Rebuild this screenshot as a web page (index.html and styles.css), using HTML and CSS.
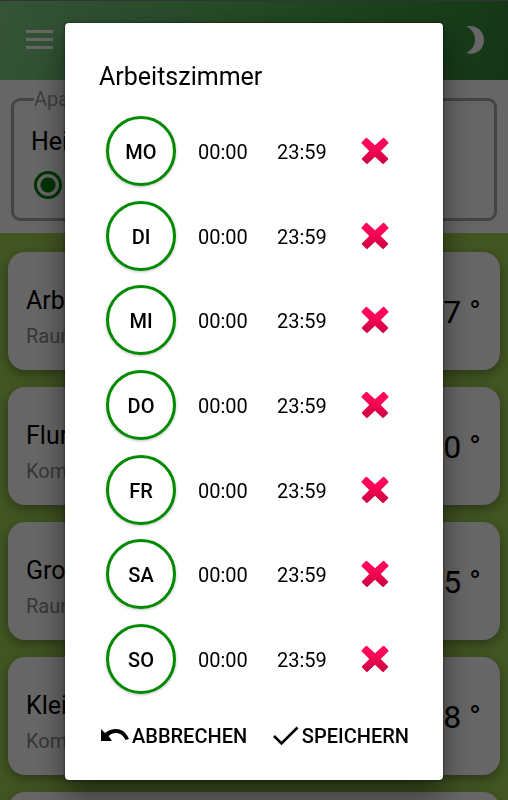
FILE: index.html
```html
<!DOCTYPE html>
<html lang="de">
<head>
<meta charset="utf-8">
<meta name="viewport" content="width=device-width, initial-scale=1">
<title>Arbeitszimmer</title>
<link rel="stylesheet" href="styles.css">
</head>
<body>
<div class="app">
  <header class="topbar">
    <button class="icon-button" aria-label="Menu"><svg width="28" height="20" viewBox="0 0 28 20"><path d="M1 1.500h27M1 9.500h27M1 17.500h27" stroke="#fff" stroke-width="3"/></svg></button>
    <button class="icon-button" aria-label="Theme"><svg width="20" height="30" viewBox="0 0 20 30"><path d="M1 1.500C10-1 19 5 19 15S10 31 1 28C13 23 13 6 1 1.500Z" fill="#fff"/></svg></button>
  </header>
  <section class="filter">
    <fieldset class="group">
      <legend>Apa</legend>
      <div class="group-title">Hei</div>
      <input class="radio" type="radio" aria-label="Hei" checked>
    </fieldset>
  </section>
  <main class="rooms">
    <article class="card"><div><h2>Arb</h2><p>Raum</p></div><span class="temp">7 °</span></article>
    <article class="card"><div><h2>Flur</h2><p>Kom</p></div><span class="temp">0 °</span></article>
    <article class="card"><div><h2>Gro</h2><p>Raum</p></div><span class="temp">5 °</span></article>
    <article class="card"><div><h2>Klei</h2><p>Kom</p></div><span class="temp">8 °</span></article>
    <article class="card"></article>
  </main>
</div>
<svg class="defs" width="0" height="0" aria-hidden="true">
  <defs>
    <linearGradient id="red" x1="0" y1="0" x2="0" y2="1"><stop offset="0.3" stop-color="#ff0759"/><stop offset="1" stop-color="#c9003f"/></linearGradient>
    <symbol id="cross" viewBox="0 0 28 28"><path d="M6 0.900L14 8.300L22 0.900Q22.600 0.500 23.200 1L27.300 5.300Q27.700 5.900 27.300 6.500L19.700 14L27 21.200Q27.400 21.800 27 22.400L22.700 26.800Q22.100 27.200 21.500 26.800L14 19.700L6.500 26.800Q5.900 27.200 5.300 26.800L1 22.400Q0.600 21.800 1 21.200L8.300 14L0.700 6.500Q0.300 5.900 0.700 5.300L4.800 1Q5.400 0.500 6 0.900Z" fill="url(#red)"/></symbol>
  </defs>
</svg>
<div class="backdrop">
  <section class="dialog" role="dialog" aria-modal="true" aria-labelledby="title">
    <h1 id="title">Arbeitszimmer</h1>
    <ul class="days">
      <li><button class="day">MO</button><button class="time">00:00</button><button class="time">23:59</button><button class="remove" aria-label="MO"><svg width="28" height="28"><use href="#cross"/></svg></button></li>
      <li><button class="day">DI</button><button class="time">00:00</button><button class="time">23:59</button><button class="remove" aria-label="DI"><svg width="28" height="28"><use href="#cross"/></svg></button></li>
      <li><button class="day">MI</button><button class="time">00:00</button><button class="time">23:59</button><button class="remove" aria-label="MI"><svg width="28" height="28"><use href="#cross"/></svg></button></li>
      <li><button class="day">DO</button><button class="time">00:00</button><button class="time">23:59</button><button class="remove" aria-label="DO"><svg width="28" height="28"><use href="#cross"/></svg></button></li>
      <li><button class="day">FR</button><button class="time">00:00</button><button class="time">23:59</button><button class="remove" aria-label="FR"><svg width="28" height="28"><use href="#cross"/></svg></button></li>
      <li><button class="day">SA</button><button class="time">00:00</button><button class="time">23:59</button><button class="remove" aria-label="SA"><svg width="28" height="28"><use href="#cross"/></svg></button></li>
      <li><button class="day">SO</button><button class="time">00:00</button><button class="time">23:59</button><button class="remove" aria-label="SO"><svg width="28" height="28"><use href="#cross"/></svg></button></li>
    </ul>
    <footer class="actions">
      <button class="action"><svg width="30" height="16" viewBox="0 0 30 16"><path d="M1 1L5 5C13-1 24-1 29 11L25.500 12C22 4 14 3 8.500 8L12 13H1Z"/></svg>ABBRECHEN</button>
      <button class="action"><svg width="28" height="22" viewBox="0 0 28 22"><path d="M2 11L9.500 18.500L25.500 2.500" fill="none" stroke="#000" stroke-width="2.600"/></svg>SPEICHERN</button>
    </footer>
  </section>
</div>
</body>
</html>
```
FILE: styles.css
```css
* { box-sizing: border-box; }
body { margin: 0; font-family: Roboto, sans-serif; color: #000; background: #a4d455; }
h1, h2, p, ul { margin: 0; padding: 0; font-weight: 400; }
button { padding: 0; border: 0; background: none; font: inherit; color: inherit; }
svg { display: block; flex: none; }
.defs { position: absolute; }

.app { height: 100vh; overflow: hidden; background: #a4d455; }
.topbar {
  display: flex; align-items: center; justify-content: space-between;
  height: 80px; padding: 0 23px 2px 25px;
  border-top: 1px solid #808080;
  background: linear-gradient(105deg, #86d08a, #4caf50 60%, #348738);
}

.filter { padding: 9px 11px 12px; background: #fff; }
.group {
  height: 132px; margin: 0; padding: 18px 17px;
  border: 3px solid #aaa; border-radius: 9px;
}
.group legend { padding: 0; margin-left: 3px; font-size: 20px; line-height: 20px; color: #999; }
.group-title { font-size: 25px; line-height: 30px; }
.radio {
  appearance: none; display: block; width: 28px; height: 28px; margin: 14px 0 0 3px;
  border: 3px solid #008000; border-radius: 50%;
  background: radial-gradient(circle, #008000 7px, transparent 8px);
}

.rooms { display: flex; flex-direction: column; gap: 17px; padding: 19px 8px; }
.card {
  display: flex; align-items: center; justify-content: space-between; flex: none;
  height: 118px; padding: 2px 19px 0 18px; border-radius: 17px; background: #fff;
  box-shadow: 0 4px 12px rgba(0, 0, 0, .35);
}
.card h2 { padding-top: 12px; font-size: 25px; line-height: 36px; }
.card p { font-size: 20px; line-height: 34px; color: #888; }
.temp { font-size: 32px; line-height: 36px; }

.backdrop {
  position: fixed; inset: 0; display: flex;
  padding: 23px 65px 20px; background: rgba(0, 0, 0, .6);
}
.dialog {
  flex: 1; display: flex; flex-direction: column;
  padding: 37px 34px 22px; border-radius: 4px; background: #fff;
  box-shadow: 0 0 3px rgba(0, 0, 0, .6), 0 14px 30px rgba(0, 0, 0, .5);
}
.dialog h1 { font-size: 25px; line-height: 34px; }
.days {
  flex: 1; display: flex; flex-direction: column; justify-content: space-between;
  margin-top: 22px; padding: 0 20px 0 7px; list-style: none;
}
.days li { display: grid; grid-template-columns: 92px 79px 1fr auto; align-items: center; justify-items: start; }
.day {
  width: 70px; height: 70px; padding-top: 2px; border: 3px solid #008a00; border-radius: 50%;
  font-size: 20px; font-weight: 500; background: #fff;
  box-shadow: 0 1px 3px rgba(0, 0, 0, .25);
}
.time { padding-top: 2px; font-size: 20px; line-height: 28px; }
.actions { display: flex; justify-content: space-between; margin-top: 20px; padding: 0 0 0 1px; }
.action { display: flex; align-items: center; gap: 2px; height: 44px; font-size: 20px; font-weight: 500; }
```
